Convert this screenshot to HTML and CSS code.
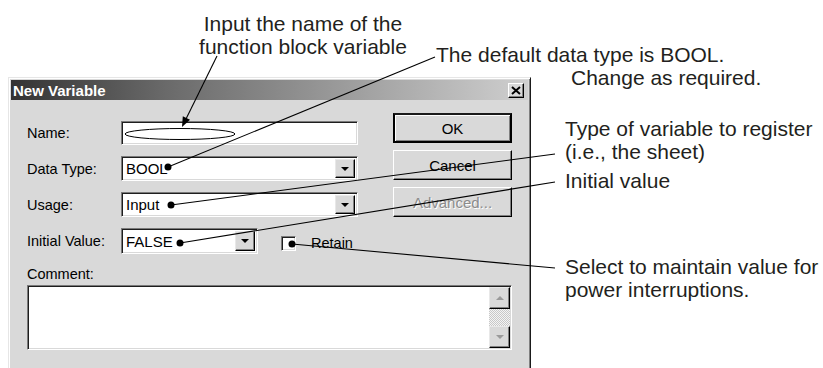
FILE: index.html
```html
<!DOCTYPE html>
<html lang="en">
  <head>
    <meta charset="UTF-8" />
    <meta name="viewport" content="width=device-width, initial-scale=1.0" />
    <title>New Variable</title>
    <link rel="stylesheet" href="styles.css">
  </head>
  <body>
    <div class="figure">
      <!-- Dialog -->
      <div class="dialog">
        <div class="titlebar">
          <span class="title">New Variable</span>
          <span class="close">
            <svg width="10" height="9" viewBox="0 0 10 9">
              <path d="M1 1 L9 8 M9 1 L1 8" stroke="#000" stroke-width="2" />
            </svg>
          </span>
        </div>

        <div class="dlg-body">
          <div class="top">
            <div class="form">
              <span class="lbl">Name:</span>
              <div class="field"></div>

              <span class="lbl">Data Type:</span>
              <div class="field combo">
                <span class="val">BOOL</span>
                <span class="drop"><i class="tri"></i></span>
              </div>

              <span class="lbl">Usage:</span>
              <div class="field combo">
                <span class="val">Input</span>
                <span class="drop"><i class="tri"></i></span>
              </div>

              <span class="lbl">Initial Value:</span>
              <div class="init-row">
                <div class="field combo short">
                  <span class="val">FALSE</span>
                  <span class="drop"><i class="tri"></i></span>
                </div>
                <span class="check"></span>
                <span class="check-lbl">Retain</span>
              </div>
            </div>

            <div class="buttons">
              <div class="btn default">OK</div>
              <div class="btn">Cancel</div>
              <div class="btn disabled">Advanced...</div>
            </div>
          </div>

          <div class="comment-lbl">Comment:</div>
          <div class="memo">
            <div class="scroll">
              <span class="sbtn"><i class="tri up"></i></span>
              <span class="track"></span>
              <span class="sbtn"><i class="tri"></i></span>
            </div>
          </div>
        </div>
      </div>

      <!-- Callouts -->
      <div class="note note-name">Input the name of the<br />function block variable</div>
      <div class="note note-type">The default data type is BOOL.<br /><span class="indent">Change as required.</span></div>
      <div class="note note-usage">Type of variable to register<br />(i.e., the sheet)</div>
      <div class="note note-init">Initial value</div>
      <div class="note note-retain">Select to maintain value for<br />power interruptions.</div>

      <svg class="leaders" width="823" height="368" viewBox="0 0 823 368">
        <ellipse cx="180" cy="134" rx="55" ry="5.5" fill="none" stroke="#000" stroke-width="1" />
        <line x1="217" y1="56" x2="185" y2="121" stroke="#000" stroke-width="1.1" />
        <polygon points="182,127 190,119.8 182.8,116.2" fill="#000" />

        <line x1="435" y1="57" x2="168" y2="167" stroke="#000" stroke-width="1.1" />
        <circle cx="168" cy="167" r="3.5" fill="#000" />

        <line x1="555" y1="154" x2="171" y2="205" stroke="#000" stroke-width="1.1" />
        <circle cx="171" cy="205" r="3.5" fill="#000" />

        <line x1="555" y1="182" x2="180" y2="243" stroke="#000" stroke-width="1.1" />
        <circle cx="180" cy="243" r="3.5" fill="#000" />

        <line x1="555" y1="268" x2="292" y2="244" stroke="#000" stroke-width="1.1" />
        <circle cx="292" cy="244" r="3.5" fill="#000" />
      </svg>
    </div>
  </body>
</html>
```

FILE: styles.css
```css
* {
  margin: 0;
  padding: 0;
  box-sizing: border-box;
}

body {
  background: #fff;
  font-family: "Liberation Sans", Arial, sans-serif;
}

.figure {
  position: relative;
  width: 823px;
  height: 368px;
  overflow: hidden;
  padding-top: 77px;
  padding-left: 8px;
}

/* dialog window */
.dialog {
  width: 523px;
  height: 320px;
  background: #d9d9d9;
  border: 1px solid;
  border-color: #e6e6e6 #1a1a1a #1a1a1a #e6e6e6;
  box-shadow: inset 1px 1px #fff, inset -1px -1px #808080;
  font-size: 14.5px;
  color: #000;
}

.titlebar {
  display: flex;
  justify-content: space-between;
  align-items: center;
  height: 20px;
  margin: 2px 2px 0 2px;
  padding: 0 4px 0 2px;
  background: linear-gradient(to right, #333 0%, #6a6a6a 30%, #cfcfcf 100%);
}

.title {
  color: #fff;
  font-weight: bold;
  font-size: 15px;
}

.close {
  display: flex;
  align-items: center;
  justify-content: center;
  width: 16px;
  height: 15px;
  background: #d9d9d9;
  border: 1px solid;
  border-color: #fff #000 #000 #fff;
  box-shadow: inset -1px -1px #808080;
}

.dlg-body {
  padding: 13px 18px 0 18px;
}

.top {
  display: flex;
  justify-content: space-between;
}

.form {
  display: grid;
  grid-template-columns: 94px 237px;
  grid-template-rows: 24px 25px 25px 26px;
  row-gap: 11px;
  align-items: center;
  padding-top: 8px;
}

/* sunken fields */
.field {
  height: 100%;
  background: #fff;
  border: 1px solid;
  border-color: #7a7a7a #fff #fff #7a7a7a;
  box-shadow: inset 1px 1px #1e1e1e, inset -1px -1px #d9d9d9;
}

.combo {
  display: flex;
  align-items: center;
  justify-content: space-between;
  padding: 2px;
}

.val {
  padding-left: 2px;
  font-size: 15px;
}

.drop {
  display: flex;
  align-items: center;
  justify-content: center;
  width: 20px;
  height: 100%;
  background: #d9d9d9;
  border: 1px solid;
  border-color: #e8e8e8 #000 #000 #e8e8e8;
  box-shadow: inset -1px -1px #808080;
}

.tri {
  width: 0;
  height: 0;
  border-left: 4px solid transparent;
  border-right: 4px solid transparent;
  border-top: 4px solid #000;
}

.tri.up {
  border-top: none;
  border-bottom: 4px solid #9a9a9a;
}

.init-row {
  display: flex;
  align-items: center;
  height: 100%;
}

.short {
  width: 137px;
}

.check {
  width: 15px;
  height: 15px;
  margin-left: 23px;
  margin-top: 4px;
  background: #fff;
  border: 1px solid;
  border-color: #7a7a7a #fff #fff #7a7a7a;
  box-shadow: inset 1px 1px #1e1e1e, inset -1px -1px #d9d9d9;
}

.check-lbl {
  margin-left: 15px;
  margin-top: 4px;
}

/* push buttons */
.buttons {
  display: flex;
  flex-direction: column;
  gap: 7px;
  width: 119px;
}

.btn {
  display: flex;
  align-items: center;
  justify-content: center;
  height: 30px;
  background: #d9d9d9;
  border: 1px solid;
  border-color: #fff #000 #000 #fff;
  box-shadow: inset -1px -1px #808080;
  font-size: 15px;
}

.btn.default {
  border: 2px solid #000;
  border-top-color: #1a1a1a;
  box-shadow: inset 1px 1px #fff, inset -1px -1px #808080;
}

.btn.disabled {
  color: #8c8c8c;
  text-shadow: 1px 1px #fff;
}

.comment-lbl {
  margin-top: 12px;
  line-height: 16px;
}

.memo {
  display: flex;
  justify-content: flex-end;
  height: 65px;
  margin-top: 3px;
  background: #fff;
  border: 1px solid;
  border-color: #7a7a7a #fff #fff #7a7a7a;
  box-shadow: inset 1px 1px #1e1e1e, inset -1px -1px #d9d9d9;
  padding: 1px 1px 1px 0;
}

.scroll {
  display: flex;
  flex-direction: column;
  width: 21px;
}

.sbtn {
  display: flex;
  align-items: center;
  justify-content: center;
  height: 22px;
  background: #d9d9d9;
  border: 1px solid;
  border-color: #e8e8e8 #000 #000 #e8e8e8;
  box-shadow: inset -1px -1px #808080;
}

.sbtn .tri {
  border-top-color: #9a9a9a;
}

.track {
  flex: 1;
  background: repeating-conic-gradient(#f4f4f4 0 25%, #c8c8c8 0 50%) 0 0 / 2px 2px;
}

/* callout texts */
.note {
  position: absolute;
  font-size: 21px;
  line-height: 23px;
  color: #231f20;
  white-space: nowrap;
}

.note-name {
  left: 183px;
  top: 12px;
  width: 240px;
  text-align: center;
}

.note-type {
  left: 436px;
  top: 43px;
}

.note-type .indent {
  padding-left: 135px;
}

.note-usage {
  left: 565px;
  top: 117px;
}

.note-init {
  left: 565px;
  top: 169px;
}

.note-retain {
  left: 565px;
  top: 255px;
}

.leaders {
  position: absolute;
  left: 0;
  top: 0;
  pointer-events: none;
}
```
